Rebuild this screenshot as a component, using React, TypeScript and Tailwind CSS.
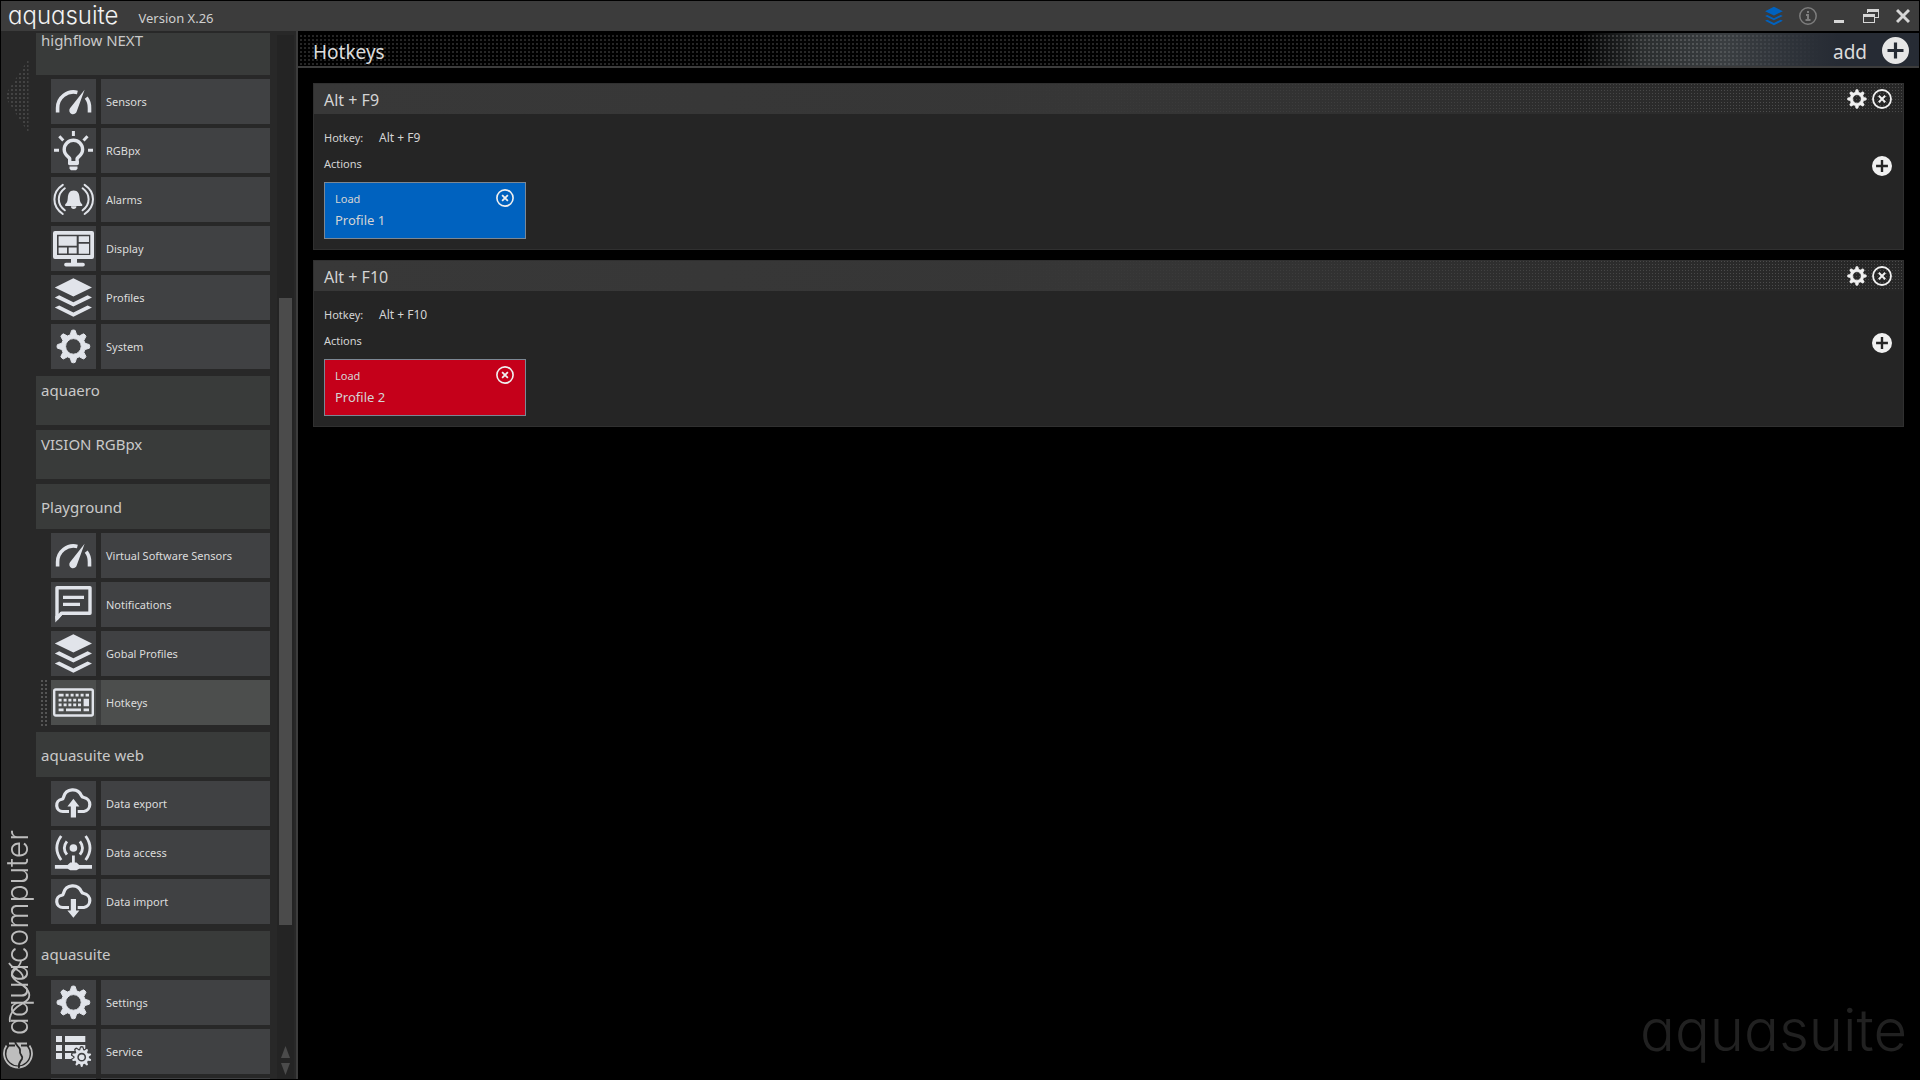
import type { ReactNode } from 'react';

/* ---------- icon drawing helpers ---------- */

function gearPath(cx: number, cy: number, outer: number, inner: number, hole: number, teeth: number) {
  const pts: string[] = [];
  const step = (Math.PI * 2) / teeth;
  const at = (r: number, a: number) => `${(cx + r * Math.sin(a)).toFixed(2)} ${(cy - r * Math.cos(a)).toFixed(2)}`;
  for (let i = 0; i < teeth; i++) {
    const a = i * step;
    pts.push(at(inner, a - step * 0.34), at(outer * 0.98, a - step * 0.14), at(outer, a), at(outer * 0.98, a + step * 0.14), at(inner, a + step * 0.34));
  }
  return `M${pts.join('L')}ZM${cx + hole} ${cy}a${hole} ${hole} 0 1 0 ${-2 * hole} 0a${hole} ${hole} 0 1 0 ${2 * hole} 0Z`;
}

function Icon({ children }: { children: ReactNode }) {
  return (
    <svg viewBox="0 0 45 45" className="size-full fill-current" aria-hidden="true">
      {children}
    </svg>
  );
}

const line = { fill: 'none', stroke: 'currentColor' };

const GaugeIcon = () => (
  <Icon>
    <g {...line} strokeWidth="3.6">
      <path d="M6.6 33.500v-4.500a16 16 0 0 1 19.800-15.600" />
      <path d="M35.200 18.700a16 16 0 0 1 3.300 10.300v4.500" />
    </g>
    <path d="M33.600 10.700 19 29.200a3.800 3.800 0 1 0 6.800 3Z" />
  </Icon>
);

const BulbIcon = () => (
  <Icon>
    <path {...line} strokeWidth="3.400" strokeLinejoin="round" d="M18.700 35v-4.500c0-1.200-5.500-3-5.500-9a9.200 9.200 0 0 1 18.400 0c0 6-5.500 7.800-5.500 9V35Z" />
    <path d="M17 33h10.800v3.200l-1.500 1h-7.800l-1.500-1ZM18.500 38.500h8v2.200l-1.500 1.500h-5l-1.500-1.500Z" />
    <path {...line} strokeWidth="3" d="M22.400 3v5M3 22.300h5M37 22.300h5M8.300 8.300l4 4.200M36.500 8.300l-4 4.200" />
  </Icon>
);

const AlarmIcon = () => (
  <Icon>
    <path d="M22.700 13.500c4.300 0 5.700 3.500 5.900 7.500.2 3.500 1 5.300 2.600 6.200v1.800H14.200v-1.800c1.600-.9 2.400-2.700 2.600-6.200.2-4 1.600-7.500 5.900-7.500ZM20 29.300h5.400a2.700 2.700 0 0 1-5.400 0Z" />
    <g {...line} strokeWidth="2" strokeLinecap="round">
      <path d="M11.800 7.800q-8.400 5.500-8.400 14.500t8.400 14.700M13.800 11.300q-6 4.500-6 11t6 11" />
      <path d="M33.600 7.800q8.400 5.500 8.400 14.500t-8.400 14.700M31.600 11.300q6 4.500 6 11t-6 11" />
    </g>
  </Icon>
);

const DisplayIcon = () => (
  <Icon>
    <path fillRule="evenodd" d="M4 5h37a2 2 0 0 1 2 2v24a2 2 0 0 1-2 2H26v3.700h6a1.800 1.800 0 0 1 0 3.700H15a1.800 1.800 0 0 1 0-3.700h5V33H4a2 2 0 0 1-2-2V7a2 2 0 0 1 2-2ZM6 8.700V29h33.300V8.700Z" />
    <path d="M7.600 10.300h18.100v9.400H7.600ZM27.700 10.300H38V16H27.700ZM27.700 17.700H38v10H27.700ZM7.600 21.600H16v6H7.600ZM17.700 21.600h8v6h-8Z" />
  </Icon>
);

const LayersShape = () => (
  <path d="M22.400 3.300 41 12.400 22.400 21.500 3.800 12.400ZM3.800 22.400l4.400-2.200 14.200 7 14.200-7 4.400 2.200-18.600 9.200ZM3.800 32.600l4.400-2.200 14.200 7 14.200-7 4.400 2.200-18.600 9.200Z" />
);

const LayersIcon = () => (
  <Icon>
    <LayersShape />
  </Icon>
);

const GearIcon = () => (
  <Icon>
    <path fillRule="evenodd" strokeLinejoin="round" stroke="currentColor" strokeWidth="1" d={gearPath(22.4, 22.4, 16.4, 12, 7.8, 8)} />
  </Icon>
);

const NoteIcon = () => (
  <Icon>
    <path {...line} strokeWidth="3.400" strokeLinejoin="round" d="M6 5.800h33v25.400H10.500L6 36.500Z" />
    <path d="M4.300 34v6.500L12 32ZM12 13.700h21V17H12ZM12 20.800h17v3.300H12Z" />
  </Icon>
);

const KeyboardIcon = () => (
  <Icon>
    <rect {...line} strokeWidth="2.400" x="3.200" y="9.500" width="38.600" height="26" rx="1.500" />
    <path d="M7.600 13.700h5v2.700h-5ZM14.600 13.700h3v2.700h-3ZM19.600 13.700h3v2.700h-3ZM24.600 13.700h3v2.700h-3ZM29.600 13.700h3v2.700h-3ZM34.600 13.700h3.400v2.700h-3.400Z" />
    <path d="M7.600 18.700h3v2.700h-3ZM12.600 18.700h3v2.700h-3ZM17.400 18.700h3v2.700h-3ZM22.200 18.700h3v2.700h-3ZM27 18.700h3v2.700h-3ZM32.600 18.700H38v7.600h-5.400Z" />
    <path d="M7.600 23.600h3v2.700h-3ZM12.600 23.600h3v2.700h-3ZM17.400 23.600h3v2.700h-3ZM22.200 23.600h3v2.700h-3ZM27 23.600h3v2.700h-3Z" />
    <path d="M7.600 28.500h5v2.700h-5ZM15 28.500h15v2.700H15ZM32.600 28.500H38v2.700h-5.400Z" />
  </Icon>
);

const cloud = 'M18 30.500h-6.200a6.200 6.200 0 0 1-1-12.300 c1.200-.3 1.600-1 1.900-2.400a9.400 9.400 0 0 1 17.700-1.200c.5 1.300 1 1.700 2.500 1.900a7.100 7.100 0 0 1 0 14h-6.200';

const CloudUpIcon = () => (
  <Icon>
    <path {...line} strokeWidth="3.200" d={cloud} />
    <path d="M22.400 17.800 28.400 25.600H25V36.500h-5.200V25.600h-3.400Z" />
  </Icon>
);

const CloudDownIcon = () => (
  <Icon>
    <path {...line} strokeWidth="3.200" transform="translate(0 -2)" d={cloud} />
    <path d="M22.400 38.700 28.400 31.500H25V20h-5.200v11.500h-3.400Z" />
  </Icon>
);

const AccessIcon = () => (
  <Icon>
    <circle cx="22.400" cy="18" r="3.800" />
    <g {...line} strokeWidth="2.800">
      <path d="M15.900 11.300q-5.200 6.700 0 13.400M28.900 11.300q5.200 6.700 0 13.400" />
      <path d="M10.200 6q-8.800 12 0 24M34.600 6q8.800 12 0 24" />
    </g>
    <path d="M21 25.500h2.800v7h1.700l2.700 2.500H41v3.700H28.200L25.500 40.300h-6.200l-2.700-1.600H3.900V35h12.700l2.700-2.500H21Z" />
  </Icon>
);

const ServiceIcon = () => (
  <Icon>
    <path d="M5 7h6v6H5ZM5 16h6v6H5ZM5 24h6v6H5ZM14 7h20.300v6H14ZM14 16h20.300v6H14ZM14 24h9v6h-9Z" />
    <path className="fill-[#404143] stroke-[#404143]" strokeWidth="2" d={gearPath(30.7, 28.2, 10.2, 7.6, 0.1, 10)} />
    <path fillRule="evenodd" d={gearPath(30.7, 28.2, 9.8, 7.2, 4.4, 10)} />
    <circle cx="30.700" cy="28.200" r="2.800" />
  </Icon>
);

const CloseCircle = ({ className }: { className: string }) => (
  <svg viewBox="0 0 20 20" className={className} fill="none" stroke="currentColor" strokeWidth="1.800" aria-hidden="true">
    <circle cx="10" cy="10" r="9" />
    <path strokeWidth="2" d="m6.800 6.800 6.400 6.400m0-6.400-6.400 6.400" />
  </svg>
);

const PlusCircle = ({ className }: { className: string }) => (
  <svg viewBox="0 0 27 27" className={className} fill="currentColor" aria-hidden="true">
    <path fillRule="evenodd" d="M13.500 0a13.500 13.500 0 1 1 0 27a13.500 13.500 0 1 1 0-27ZM11.900 5.500v6.400H5.500v3.200h6.400v6.400h3.200v-6.400h6.400v-3.200h-6.400V5.500Z" />
  </svg>
);

/* ---------- navigation ---------- */

type Item = { label: string; icon: ReactNode; active?: boolean };
type Section = { title: string; tall?: boolean; items: Item[] };

const sections: Section[] = [
  {
    title: 'highflow NEXT',
    tall: true,
    items: [
      { label: 'Sensors', icon: <GaugeIcon /> },
      { label: 'RGBpx', icon: <BulbIcon /> },
      { label: 'Alarms', icon: <AlarmIcon /> },
      { label: 'Display', icon: <DisplayIcon /> },
      { label: 'Profiles', icon: <LayersIcon /> },
      { label: 'System', icon: <GearIcon /> },
    ],
  },
  { title: 'aquaero', tall: true, items: [] },
  { title: 'VISION RGBpx', tall: true, items: [] },
  {
    title: 'Playground',
    items: [
      { label: 'Virtual Software Sensors', icon: <GaugeIcon /> },
      { label: 'Notifications', icon: <NoteIcon /> },
      { label: 'Gobal Profiles', icon: <LayersIcon /> },
      { label: 'Hotkeys', icon: <KeyboardIcon />, active: true },
    ],
  },
  {
    title: 'aquasuite web',
    items: [
      { label: 'Data export', icon: <CloudUpIcon /> },
      { label: 'Data access', icon: <AccessIcon /> },
      { label: 'Data import', icon: <CloudDownIcon /> },
    ],
  },
  {
    title: 'aquasuite',
    items: [
      { label: 'Settings', icon: <GearIcon /> },
      { label: 'Service', icon: <ServiceIcon /> },
      { label: '', icon: null },
    ],
  },
];

function NavItem({ item }: { item: Item }) {
  const tone = item.active ? 'bg-[#4c4e4d]' : 'bg-[#404143]';
  return (
    <li className="relative">
      {item.active && (
        <span className="absolute top-0 -left-2.5 h-[46px] w-1.5 bg-[conic-gradient(transparent_75%,#555_0)] bg-[length:4px_4px]" />
      )}
      <button
        type="button"
        aria-label={item.label || 'More'}
        aria-current={item.active ? 'page' : undefined}
        className={`flex h-[45px] w-full text-left text-[11px] text-[#dcdcdc] ${item.active ? 'bg-[#3a3b3b]' : ''}`}
      >
        <span className={`size-[45px] shrink-0 text-[#e1e4ea] ${tone}`}>{item.icon}</span>
        <span className={`ml-[5px] flex h-full flex-1 items-center pt-0.5 pl-[5px] ${tone}`}>{item.label}</span>
      </button>
    </li>
  );
}

function Sidebar() {
  return (
    <aside className="flex w-[297px] shrink-0 overflow-hidden border-r-2 border-[#3c3c3c] bg-[#282828]">
      <div className="flex w-[35px] shrink-0 flex-col items-center justify-between pt-7 pb-2">
        <button
          type="button"
          aria-label="Collapse navigation"
          className="mr-1 h-[74px] w-6 bg-[conic-gradient(transparent_25%,#434343_0_50%,transparent_0)] bg-[length:4px_4px] [clip-path:polygon(100%_0,100%_100%,0_50%)]"
        />
        <div className="flex flex-col items-center gap-1.5 pr-0.5 text-[#bdbdbd]">
          <div className="relative pr-0.5">
            <span className="block rotate-180 font-[Inter,sans-serif] text-[30px] leading-9 font-light [font-feature-settings:'cv11'] [writing-mode:vertical-rl]">
              aquacomputer
            </span>
            <svg viewBox="0 0 32 70" className="absolute bottom-2 left-0.5 h-[70px] w-8" fill="none" stroke="currentColor" strokeWidth="1.800" aria-hidden="true">
              <path d="M20 4C19 12 9 13 11 19s15 9 17 17-6 9-12 14-8 10-7 15M8 6c4 7 14 7 14 15" />
            </svg>
          </div>
          <svg viewBox="0 0 30 30" className="size-[30px]" aria-hidden="true">
            <path fill="none" stroke="currentColor" strokeWidth="1.800" d="M3.500 4.500A14 14 0 1 0 26.500 4.500" />
            <path fill="currentColor" d="M6 1.500h18v4a11.600 11.600 0 1 1-18 0Z" />
            <path className="stroke-[#282828]" fill="none" strokeWidth="1.800" d="M12 0c0 5 6 6 5 10s4 5 2 8-4 4-3 9M4 4.500h8M18 4.500h8" />
          </svg>
        </div>
      </div>

      <nav className="mt-0.5 min-w-0 flex-1 overflow-hidden" aria-label="Devices">
        <div className="-mt-[7px] pb-1">
          {sections.map((section, i) => {
            const afterItems = i > 0 && sections[i - 1].items.length > 0;
            return (
              <section key={section.title} className={i === 0 ? '' : afterItems ? 'mt-[7px]' : 'mt-[5px]'}>
                <h2
                  className={`flex bg-[#393b3a] pl-[5px] text-[15px] leading-[22px] text-[#c9c9c9] ${
                    section.tall ? 'h-[49px] items-start pt-[3px]' : 'h-[45px] items-center'
                  }`}
                >
                  {section.title}
                </h2>
                {section.items.length > 0 && (
                  <ul className="mt-1 flex flex-col gap-1 pl-[15px]">
                    {section.items.map((item, n) => (
                      <NavItem key={n} item={item} />
                    ))}
                  </ul>
                )}
              </section>
            );
          })}
        </div>
      </nav>

      <div className="mt-1 mr-0.5 ml-[7px] flex w-[17px] shrink-0 flex-col items-center bg-[#242424] pb-1">
        <div className="flex w-full flex-1 flex-col items-center">
          <div className="grow-[263]" />
          <div className="w-[13px] grow-[627] bg-[#4b4b4b]" />
          <div className="grow-[113]" />
        </div>
        <div className="mt-2 flex flex-col gap-[5px]">
          <button type="button" aria-label="Scroll up" className="h-3 w-[9px] bg-[#4b4b4b] [clip-path:polygon(50%_0,100%_100%,0_100%)]" />
          <button type="button" aria-label="Scroll down" className="h-3 w-[9px] bg-[#4b4b4b] [clip-path:polygon(0_0,100%_0,50%_100%)]" />
        </div>
      </div>
    </aside>
  );
}

/* ---------- content ---------- */

type Hotkey = { keys: string; profile: string; tone: string };

const hotkeys: Hotkey[] = [
  { keys: 'Alt + F9', profile: 'Profile 1', tone: 'bg-[#0062bf]' },
  { keys: 'Alt + F10', profile: 'Profile 2', tone: 'bg-[#c5001a]' },
];

function HotkeyCard({ keys, profile, tone }: Hotkey) {
  return (
    <article className="border border-[#303030] bg-[#252525] text-[#d4d4d4]">
      <header className="relative flex h-[30px] items-center justify-between bg-linear-to-r from-[#383838] via-[#363636] to-[#262626] pr-[11px] pl-2.5">
        <span className="absolute inset-0 bg-[conic-gradient(at_1px_1px,transparent_75%,#4c4c4c_0)] bg-[length:3px_3px] [mask-image:linear-gradient(to_right,transparent_42%,black_90%)]" />
        <h2 className="relative pt-0.5 text-[16px] leading-[22px]">{keys}</h2>
        <div className="relative flex gap-[5px] text-[#f0f0f0]">
          <button type="button" aria-label={`Configure ${keys}`} className="size-5">
            <svg viewBox="5 5 35 35" className="size-full" fill="currentColor" aria-hidden="true">
              <path fillRule="evenodd" stroke="currentColor" d={gearPath(22.4, 22.4, 16.6, 12, 7.4, 8)} />
            </svg>
          </button>
          <button type="button" aria-label={`Remove ${keys}`} className="size-5">
            <CloseCircle className="size-full" />
          </button>
        </div>
      </header>
      <div className="pt-3.5 pr-[11px] pb-2.5 pl-2.5">
        <dl className="flex h-5 items-center">
          <dt className="w-[55px] text-[11px]">Hotkey:</dt>
          <dd className="text-xs">{keys}</dd>
        </dl>
        <div className="mt-1.5 flex items-start justify-between">
          <h3 className="text-[11px] leading-5">Actions</h3>
          <button type="button" aria-label={`Add action to ${keys}`} className="mt-0.5 size-5 text-[#f0f0f0]">
            <PlusCircle className="size-full" />
          </button>
        </div>
        <div className={`mt-1.5 flex h-[57px] w-[202px] justify-between border border-[#7b8794] pt-1.5 pr-[11px] pl-2.5 ${tone}`}>
          <div>
            <p className="text-[11px] leading-5">Load</p>
            <p className="text-[13px] leading-[22px]">{profile}</p>
          </div>
          <button type="button" aria-label={`Remove ${profile}`} className="size-[18px] text-[#f0f0f0]">
            <CloseCircle className="size-full" />
          </button>
        </div>
      </div>
    </article>
  );
}

function TitleBar() {
  return (
    <header className="flex h-[30px] shrink-0 items-center justify-between bg-[#3c3c3c] pr-[9px] pl-[7px]">
      <div className="flex items-center">
        <h1 className="font-[Inter,sans-serif] text-2xl leading-6 font-light text-[#f2f2f2] [font-feature-settings:'cv11']">aquasuite</h1>
        <span className="mt-1 ml-5 text-[13px] leading-5 text-[#cfcfcf]">Version X.26</span>
      </div>
      <div className="flex items-center text-[#d6d6d6]">
        <button type="button" aria-label="Profiles" className="size-5 text-[#0062bf]">
          <svg viewBox="2 1.500 41 42" className="size-full fill-current" aria-hidden="true">
            <LayersShape />
          </svg>
        </button>
        <button type="button" aria-label="Information" className="ml-[15px] size-[18px] text-[#7d7d7d]">
          <svg viewBox="0 0 18 18" className="size-full" fill="none" stroke="currentColor" strokeWidth="1.500" aria-hidden="true">
            <circle cx="9" cy="9" r="8.200" />
            <path strokeWidth="2" d="M9 4v2M7 8h2v5M6.500 13h5" />
          </svg>
        </button>
        <button type="button" aria-label="Minimize" className="ml-[17px] h-4">
          <svg viewBox="0 0 10 16" className="h-4 w-2.5 fill-current" aria-hidden="true">
            <path d="M0 12h10v3H0Z" />
          </svg>
        </button>
        <button type="button" aria-label="Restore" className="ml-[19px] h-4">
          <svg viewBox="0 0 16 16" className="h-4 w-4 fill-current" aria-hidden="true">
            <path fillRule="evenodd" d="M4 1h12v9h-4V9h3V4H5v1H4ZM0 6h12v9H0ZM1 9v5h10V9Z" />
          </svg>
        </button>
        <button type="button" aria-label="Close" className="ml-[17px] h-4">
          <svg viewBox="0 0 14 16" className="h-4 w-3.5" fill="none" stroke="currentColor" strokeWidth="3" aria-hidden="true">
            <path d="m1 2 12 12M13 2 1 14" />
          </svg>
        </button>
      </div>
    </header>
  );
}

export default function App() {
  return (
    <div className="flex h-screen flex-col overflow-hidden border border-black bg-black font-['Noto_Sans',sans-serif]">
      <TitleBar />
      <div className="flex min-h-0 flex-1">
        <Sidebar />
        <main className="relative flex min-w-0 flex-1 flex-col">
          <header className="relative mt-0.5 flex h-[35px] shrink-0 items-center justify-between border-b-2 border-[#3c3c3c] bg-[linear-gradient(to_right,#000_79%,#2b2e2f_83%,#3a3e41_88%,#262b34_95%)] pr-2.5 pl-[15px] text-[#dcdcdc]">
            <span className="absolute inset-0 bg-[conic-gradient(transparent_25%,#fff_0_50%,transparent_0)] bg-[length:4px_4px] opacity-15 [mask-image:linear-gradient(to_right,black_86%,transparent_94%)]" />
            <h2 className="relative pt-1 text-[19px] leading-7">Hotkeys</h2>
            <button type="button" className="relative flex items-center gap-[15px] text-[19px] leading-7">
              <span className="pt-1">add</span>
              <PlusCircle className="mt-0.5 size-[27px] text-[#e6e6e6]" />
            </button>
          </header>
          <div className="flex flex-col gap-2.5 p-[15px]">
            {hotkeys.map((h) => (
              <HotkeyCard key={h.keys} {...h} />
            ))}
          </div>
          <span className="absolute right-3 bottom-3.5 font-[Inter,sans-serif] text-[58px] leading-[70px] font-light text-[#212121] [font-feature-settings:'cv11']">
            aquasuite
          </span>
        </main>
      </div>
    </div>
  );
}
